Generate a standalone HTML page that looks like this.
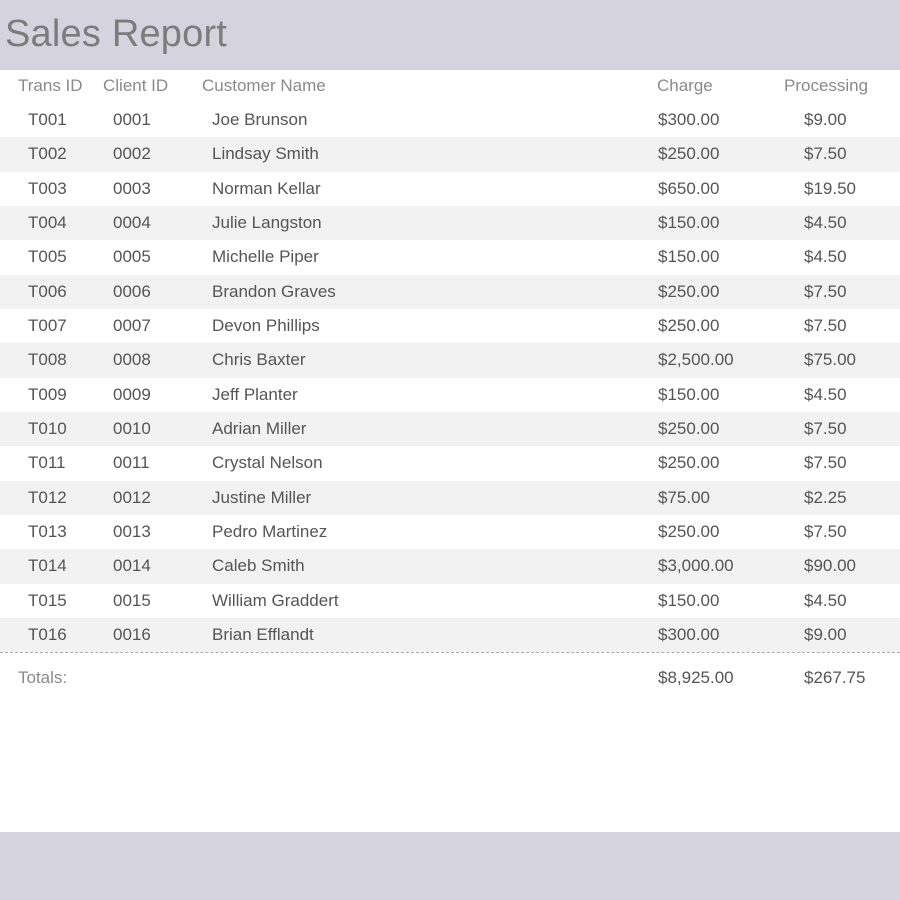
<!DOCTYPE html>
<html><head><style>
body{margin:0;width:900px;height:900px;position:relative;background:#fff;font-family:"Liberation Sans",sans-serif;overflow:hidden}
.top{position:absolute;left:0;top:0;width:900px;height:70px;background:#d5d3de}
.bot{position:absolute;left:0;top:832px;width:900px;height:68px;background:#d5d3de}
h1{position:absolute;left:5px;top:13px;margin:0;font-weight:normal;font-size:38px;color:#7c7c7c;letter-spacing:0.2px}
.h{position:absolute;top:76px;font-size:17px;color:#8a8a8a}
.r{position:absolute;left:0;width:900px;height:34.33px}
.r.g{background:#f2f2f2}
.r span{position:absolute;top:7px;font-size:17px;color:#555}
.line{position:absolute;left:0;top:652px;width:900px;border-top:1px dashed #aaa}
.t{position:absolute;top:668px;font-size:17px;color:#555}
</style></head><body>
<div class="top"></div><h1>Sales Report</h1>
<div class="h" style="left:18px">Trans ID</div>
<div class="h" style="left:103px">Client ID</div>
<div class="h" style="left:202px">Customer Name</div>
<div class="h" style="left:657px">Charge</div>
<div class="h" style="left:784px">Processing</div>
<div id="rows"></div>
<script>
var d=[["Joe Brunson","$300.00","$9.00"],["Lindsay Smith","$250.00","$7.50"],["Norman Kellar","$650.00","$19.50"],["Julie Langston","$150.00","$4.50"],["Michelle Piper","$150.00","$4.50"],["Brandon Graves","$250.00","$7.50"],["Devon Phillips","$250.00","$7.50"],["Chris Baxter","$2,500.00","$75.00"],["Jeff Planter","$150.00","$4.50"],["Adrian Miller","$250.00","$7.50"],["Crystal Nelson","$250.00","$7.50"],["Justine Miller","$75.00","$2.25"],["Pedro Martinez","$250.00","$7.50"],["Caleb Smith","$3,000.00","$90.00"],["William Graddert","$150.00","$4.50"],["Brian Efflandt","$300.00","$9.00"]];
var h="";d.forEach(function(r,i){var n=("0"+(i+1)).slice(-2);h+='<div class="r'+(i%2?' g':'')+'" style="top:'+(103+i*34.33)+'px"><span style="left:28px">T0'+n+'</span><span style="left:113px">00'+n+'</span><span style="left:212px">'+r[0]+'</span><span style="left:658px">'+r[1]+'</span><span style="left:804px">'+r[2]+'</span></div>'});
document.getElementById("rows").innerHTML=h;
</script>
<div class="line"></div>
<div class="t" style="left:18px;color:#8a8a8a">Totals:</div>
<div class="t" style="left:658px">$8,925.00</div>
<div class="t" style="left:804px">$267.75</div>
<div class="bot"></div>
</body></html>
